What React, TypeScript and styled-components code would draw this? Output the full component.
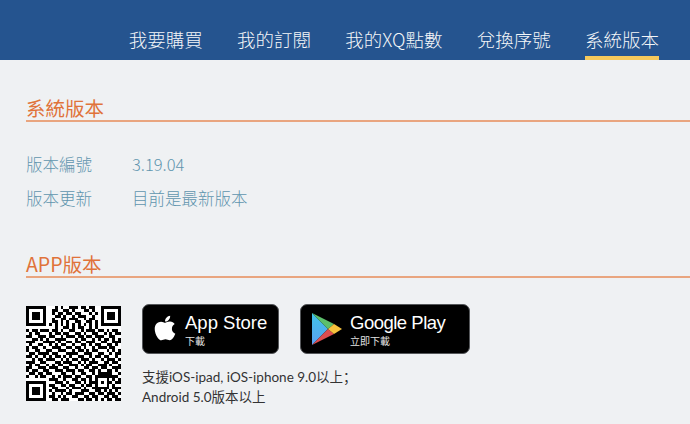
import React from 'react';
import styled, { createGlobalStyle } from 'styled-components';
import { FaApple } from 'react-icons/fa';

const FONT = `"Noto Sans CJK TC", "Noto Sans", sans-serif`;

const NAV_ITEMS = ['我要購買', '我的訂閱', '我的XQ點數', '兌換序號', '系統版本'];

const QR_ROWS = [
    '111111100010100111011011001111111',
    '100000100110011010001101001000001',
    '101110100101101101100010101011101',
    '101110100011010010111001001011101',
    '101110100100110111001011001011101',
    '100000100110101001100110101000001',
    '111111101010101010101010101111111',
    '000000000010011010110010100000000',
    '101101110110100110010111011010110',
    '010110001011011001101001100101011',
    '110011101100101110110110111001100',
    '001101010011110001011001010110101',
    '111000111101001101100111001100111',
    '010011001010110010011010110011010',
    '101100100111001101101001011101100',
    '100110011001110010110101100010101',
    '011011110110001111001110011001011',
    '110100101011010100110010110110010',
    '001011011100101011011101001011101',
    '111001100011011100101011100110110',
    '010110010101100111010110011101001',
    '110011101110011001001101101100111',
    '101100110011101110110011010011010',
    '011011011000110010011001011111001',
    '100101100101011101100110111111110',
    '000000001110010011011010100010101',
    '111111100011101001101011101011011',
    '100000101100110110010110100010100',
    '101110100110001011101001111110111',
    '101110101011110100011100110101010',
    '101110100100101101110011011011101',
    '100000101101010011001101100110110',
    '111111100110111000110110101011011',
];

const GlobalStyle = createGlobalStyle`
    html, body {
        margin: 0;
        height: 100%;
        overflow: hidden;
        background: #eff1f3;
        font-family: ${FONT};
    }
`;

const Page = styled.div`
    width: 690px;
    height: 424px;
    overflow: hidden;
    background: #eff1f3;
`;

const Header = styled.nav`
    height: 60px;
    box-sizing: border-box;
    background: #25548f;
    display: flex;
    justify-content: flex-end;
    align-items: stretch;
    gap: 34.25px;
    padding: 0 31px 0 0;
`;

const NavItem = styled.a<{ $active?: boolean }>`
    height: 60px;
    box-sizing: border-box;
    padding-top: 25px;
    font-size: 18.5px;
    line-height: 28px;
    font-weight: 300;
    color: #f4f6f8;
    white-space: nowrap;
    border-bottom: 4px solid ${(p) => (p.$active ? '#f5c95c' : 'transparent')};
`;

const Main = styled.main`
    padding: 33px 0 0 26px;
`;

const SectionTitle = styled.h2`
    margin: 0;
    height: 27px;
    font-size: 19.5px;
    line-height: 29px;
    font-weight: 400;
    color: #e0733a;
    border-bottom: 2px solid #e9a57f;
`;

const InfoList = styled.div`
    display: grid;
    grid-template-columns: 106px 1fr;
    row-gap: 9px;
    padding: 30px 0 38px;
`;

const InfoLabel = styled.span`
    font-size: 16.5px;
    line-height: 25px;
    font-weight: 300;
    color: #5f95ae;
`;

const Downloads = styled.div`
    display: flex;
    gap: 21px;
    padding-top: 26px;
`;

const QrCode = styled.svg`
    width: 95px;
    height: 95px;
    margin-top: 2px;
    flex: none;
    background: #fff;
    shape-rendering: crispEdges;
`;

const StoreColumn = styled.div`
    display: flex;
    flex-direction: column;
`;

const BadgeRow = styled.div`
    display: flex;
    gap: 21px;
`;

const Badge = styled.a<{ $width: number }>`
    width: ${(p) => p.$width}px;
    height: 50px;
    box-sizing: border-box;
    background: #000;
    border: 1px solid #55575a;
    border-radius: 7px;
    display: flex;
    align-items: center;
    color: #fff;
`;

const AppleMark = styled(FaApple)`
    width: 28px;
    height: 28px;
    margin: 0 6px 2px 8px;
    flex: none;
`;

const PlayMark = styled.svg`
    width: 32px;
    height: 34px;
    margin: 0 7px 0 10px;
    flex: none;
`;

const BadgeText = styled.div`
    display: flex;
    flex-direction: column;
    gap: 1px;
`;

const BadgeName = styled.span<{ $tight?: boolean }>`
    font-family: "Liberation Sans", sans-serif;
    font-size: 18.5px;
    line-height: 22px;
    height: 22px;
    letter-spacing: ${(p) => (p.$tight ? '-0.5px' : '0')};
`;

const BadgeHint = styled.span`
    font-size: 10px;
    line-height: 12px;
    height: 12px;
    color: #e4e4e4;
`;

const Note = styled.p`
    margin: 13px 0 0;
    font-family: Lato, "Noto Sans CJK SC", sans-serif;
    font-size: 13.5px;
    line-height: 20px;
    color: #333;
`;

const App: React.FC = () => {
    return (
        <Page>
            <GlobalStyle />
            <Header>
                {NAV_ITEMS.map((item, i) => (
                    <NavItem key={item} $active={i === NAV_ITEMS.length - 1}>
                        {item}
                    </NavItem>
                ))}
            </Header>
            <Main>
                <SectionTitle>系統版本</SectionTitle>
                <InfoList>
                    <InfoLabel>版本編號</InfoLabel>
                    <InfoLabel>3.19.04</InfoLabel>
                    <InfoLabel>版本更新</InfoLabel>
                    <InfoLabel>目前是最新版本</InfoLabel>
                </InfoList>
                <SectionTitle>APP版本</SectionTitle>
                <Downloads>
                    <QrCode viewBox="0 0 33 33">
                        {QR_ROWS.map((row, y) =>
                            row.split('').map((cell, x) =>
                                cell === '1' ? <rect key={`${x}-${y}`} x={x} y={y} width="1" height="1" fill="#000" /> : null
                            )
                        )}
                    </QrCode>
                    <StoreColumn>
                        <BadgeRow>
                            <Badge $width={137}>
                                <AppleMark />
                                <BadgeText>
                                    <BadgeName>App Store</BadgeName>
                                    <BadgeHint>下載</BadgeHint>
                                </BadgeText>
                            </Badge>
                            <Badge $width={170}>
                                <PlayMark viewBox="0 0 32 34">
                                    <defs>
                                        <linearGradient id="playBlue" x1="0" y1="0" x2="0" y2="1">
                                            <stop offset="0" stopColor="#3fc4e8" />
                                            <stop offset="1" stopColor="#5a9ff0" />
                                        </linearGradient>
                                    </defs>
                                    <polygon points="1,1 1,33 17,17" fill="url(#playBlue)" />
                                    <polygon points="1,1 23,12 17,17" fill="#5cbf6b" />
                                    <polygon points="1,33 23,22 17,17" fill="#dd4d50" />
                                    <polygon points="23,12 31,17 23,22 17,17" fill="#f6c23d" />
                                </PlayMark>
                                <BadgeText>
                                    <BadgeName $tight>Google Play</BadgeName>
                                    <BadgeHint>立即下載</BadgeHint>
                                </BadgeText>
                            </Badge>
                        </BadgeRow>
                        <Note>
                            支援iOS-ipad, iOS-iphone 9.0以上；
                            <br />
                            Android 5.0版本以上
                        </Note>
                    </StoreColumn>
                </Downloads>
            </Main>
        </Page>
    );
};

export default App;
